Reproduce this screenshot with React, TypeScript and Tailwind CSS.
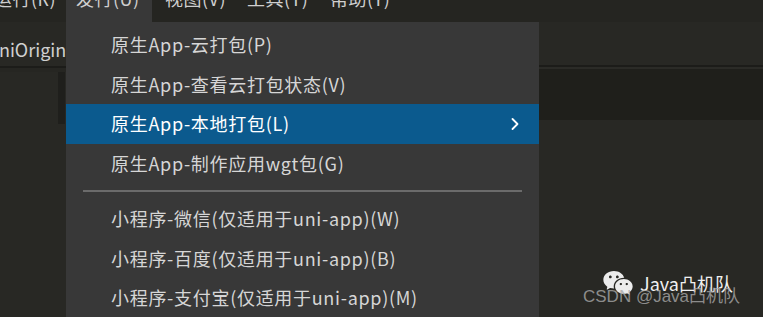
import React from 'react';
import { ChevronRight } from 'lucide-react';
import { RiWechatFill } from 'react-icons/ri';

const topMenus = [
  { label: '运行(R)', active: false, width: 'w-[66px]', pad: '-ml-[6px]' },
  { label: '发行(U)', active: true, width: 'w-[86px]', pad: 'ml-[10px]' },
  { label: '视图(V)', active: false, width: 'w-[82px]', pad: 'ml-[13px]' },
  { label: '工具(T)', active: false, width: 'w-[83px]', pad: 'ml-[13px]' },
  { label: '帮助(Y)', active: false, width: 'w-[80px]', pad: 'ml-[13px]' }
];

const groupA = [
  { label: '原生App-云打包(P)' },
  { label: '原生App-查看云打包状态(V)' },
  { label: '原生App-本地打包(L)', active: true, sub: true },
  { label: '原生App-制作应用wgt包(G)' }
];

const groupB = [
  { label: '小程序-微信(仅适用于uni-app)(W)' },
  { label: '小程序-百度(仅适用于uni-app)(B)' },
  { label: '小程序-支付宝(仅适用于uni-app)(M)' }
];

function MenuItem({ label, active, sub }: { label: string; active?: boolean; sub?: boolean }) {
  return (
    <div
      className={`flex h-[39.5px] items-center justify-between pl-[45px] pr-[14px] ${active ? 'bg-[#0b5a8e] text-white' : 'text-[#d6d6d6]'}`}>
      <span className="tracking-[0.7px]">{label}</span>
      {sub && <ChevronRight size={20} strokeWidth={2.2} className="text-white" />}
    </div>
  );
}

export default function App() {
  return (
    <div
      className="relative h-[317px] w-[763px] overflow-hidden bg-[#282824] text-[18px]"
      style={{ fontFamily: '"Noto Sans CJK SC", "Noto Sans", sans-serif' }}>
      {/* Menu bar */}
      <div className="flex h-[22px] bg-[#252521]">
        {topMenus.map((m) =>
        <div
          key={m.label}
          className={`${m.width} h-full shrink-0 overflow-hidden ${m.active ? 'bg-[#383838]' : ''}`}>
            <span className={`${m.pad} -mt-[17px] block whitespace-nowrap leading-[30px] tracking-[0.5px] text-[#cfcfcf]`}>{m.label}</span>
          </div>
        )}
      </div>

      {/* Tab row + editor */}
      <div className="flex">
        <div className="w-[66px] shrink-0">
          <div className="h-[44px] overflow-hidden bg-[#282824]">
            <div className="-ml-[12px] pt-[15px] whitespace-nowrap leading-[24px] text-[#d0d0d0]">uniOriginal</div>
          </div>
          <div className="h-[2px] bg-[#1c1c19]" />
          <div className="h-[4px] bg-[#262622]" />
          <div className="flex h-[52px] justify-end">
            <div className="mr-[1px] w-[7px] bg-[#1f1f1c]" />
          </div>
        </div>
        <div className="flex-1">
          <div className="h-[43px] bg-[#282824]" />
          <div className="h-[2px] bg-[#1c1c19]" />
          <div className="h-[2px] bg-[#2b2b27]" />
          <div className="h-[51px] bg-[#1f1f1b]" />
        </div>
      </div>

      {/* Dropdown */}
      <div className="absolute bottom-0 left-[66px] top-[22px] w-[473px] bg-[#383838] pt-[3px]">
        {groupA.map((i) =>
        <MenuItem key={i.label} {...i} />
        )}
        <div className="mx-[17px] my-[7px] h-[2px] bg-[#6b6b6b]" />
        {groupB.map((i) =>
        <MenuItem key={i.label} {...i} />
        )}
      </div>

      {/* Watermark */}
      <div className="absolute left-[602px] top-[267px] flex items-center gap-[6px]">
        <RiWechatFill size={32} className="text-[#ececec]" />
        <span className="text-[18px] text-[#f0f0f0]">Java凸机队</span>
      </div>
      <div
        className="absolute left-[583px] top-[284px] text-[17px] text-[#a8a8a8]/80"
        style={{ fontFamily: '"Liberation Sans", "Noto Sans CJK SC", sans-serif' }}>
        CSDN @Java凸机队
      </div>
    </div>
  );
}
